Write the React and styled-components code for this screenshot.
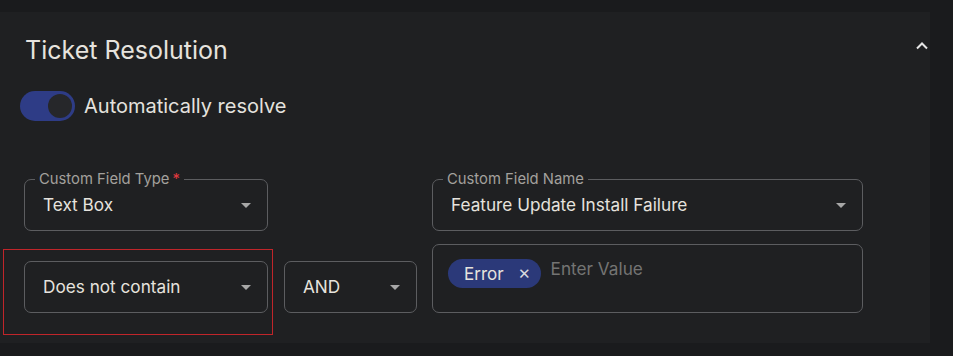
import styled, { createGlobalStyle } from "styled-components";

const Global = createGlobalStyle`
  html, body {
    margin: 0;
    padding: 0;
    background: #1a1b1d;
  }
  body {
    font-family: Inter, "Noto Sans", sans-serif;
    color: #e4e2de;
  }
`;

const Panel = styled.section`
  margin-top: 12px;
  width: 930px;
  height: 331px;
  box-sizing: border-box;
  background: #1f2022;
  padding: 24px 0 0 0;
  position: relative;
`;

const Header = styled.div`
  display: flex;
  align-items: center;
  justify-content: space-between;
  padding: 0 0 0 25px;
  height: 26px;
`;

const Title = styled.h2`
  margin: 2px 0 0 0;
  font-size: 25px;
  font-weight: 400;
  line-height: 28px;
  color: #e6e3de;
`;

const Collapse = styled.button`
  border: 0;
  background: transparent;
  width: 16px;
  height: 28px;
  margin-top: -8px;
  display: flex;
  align-items: center;
  justify-content: center;
  cursor: pointer;
  padding: 0;
`;

const ToggleRow = styled.label`
  display: flex;
  align-items: center;
  gap: 9px;
  margin: 29px 0 0 20px;
  font-size: 20px;
  color: #e4e2de;
`;

const Track = styled.span`
  width: 55px;
  height: 30px;
  border-radius: 15px;
  background: #2e3c86;
  display: flex;
  align-items: center;
  justify-content: ${(p) => (p.on ? "flex-end" : "flex-start")};
  padding: 0 3px;
  box-sizing: border-box;
`;

const Thumb = styled.span`
  width: 24px;
  height: 24px;
  border-radius: 50%;
  background: #26272a;
`;

const Fields = styled.div`
  display: grid;
  grid-template-columns: 244px 134px 431px;
  column-gap: 15px;
  row-gap: 13px;
  margin: 58px 0 0 24px;
  align-items: end;
`;

const Cell = styled.div`
  position: relative;
  grid-column: ${(p) => p.col};
  padding-left: ${(p) => (p.col === 2 ? 1 : 0)}px;
`;

const Highlight = styled.div`
  position: absolute;
  left: -21px;
  right: -5px;
  top: -12px;
  bottom: -22px;
  border: 1px solid #c0252a;
  pointer-events: none;
`;

const Box = styled.div`
  position: relative;
  box-sizing: border-box;
  height: ${(p) => p.h || 52}px;
  border: 1px solid #5c5d60;
  border-radius: 7px;
  display: flex;
  align-items: ${(p) => (p.top ? "flex-start" : "center")};
  padding: ${(p) => (p.top ? "14px 16px 0 15px" : "0 16px 2px 18px")};
  gap: 10px;
`;

const Label = styled.span`
  position: absolute;
  top: -10px;
  left: 10px;
  padding: 0 4px;
  background: #1f2022;
  font-size: 14.8px;
  line-height: 18px;
  color: #a3a19d;
`;

const Required = styled.span`
  color: #e0393f;
  margin-left: 3px;
`;

const Value = styled.span`
  flex: 1;
  font-size: 17.2px;
  color: #e6e3de;
  white-space: nowrap;
`;

const Caret = styled.span`
  width: 0;
  height: 0;
  border-left: 5px solid transparent;
  border-right: 5px solid transparent;
  border-top: 5px solid #a7a7a7;
  margin-top: 2px;
`;

const Chip = styled.span`
  display: inline-flex;
  align-items: center;
  height: 29px;
  border-radius: 15px;
  background: #2b3979;
  padding: 0 10px 0 16px;
  gap: 14px;
  font-size: 17px;
  color: #e6e3de;
`;

const ChipX = styled.span`
  font-size: 15px;
  color: #d9d9de;
  line-height: 1;
`;

const Placeholder = styled.span`
  font-size: 17.2px;
  color: #747473;
  line-height: 29px;
  margin-top: -5px;
`;

function Select({ label, required, value }) {
  return (
    <Box>
      {label && (
        <Label>
          {label}
          {required && <Required>*</Required>}
        </Label>
      )}
      <Value>{value}</Value>
      <Caret />
    </Box>
  );
}

export default function App() {
  return (
    <>
      <Global />
      <Panel>
        <Header>
          <Title>Ticket Resolution</Title>
          <Collapse aria-label="collapse">
            <svg width="14" height="9" viewBox="0 0 14 9">
              <polyline
                points="2,7.5 7,2.5 12,7.5"
                fill="none"
                stroke="#e6e6e6"
                strokeWidth="2"
              />
            </svg>
          </Collapse>
        </Header>
        <ToggleRow>
          <Track on>
            <Thumb />
          </Track>
          Automatically resolve
        </ToggleRow>
        <Fields>
          <Cell col={1}>
            <Select label="Custom Field Type" required value="Text Box" />
          </Cell>
          <Cell col={3}>
            <Select label="Custom Field Name" value="Feature Update Install Failure" />
          </Cell>
          <Cell col={1}>
            <Highlight />
            <Select value="Does not contain" />
          </Cell>
          <Cell col={2}>
            <Select value="AND" />
          </Cell>
          <Cell col={3}>
            <Box h={69} top>
              <Chip>
                Error
                <ChipX>✕</ChipX>
              </Chip>
              <Placeholder>Enter Value</Placeholder>
            </Box>
          </Cell>
        </Fields>
      </Panel>
    </>
  );
}
